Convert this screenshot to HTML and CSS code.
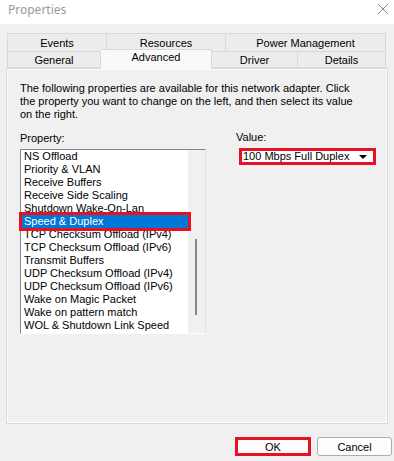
FILE: index.html
```html
<!DOCTYPE html>
<html lang="en">

<head>
    <meta charset="UTF-8">
    <meta name="viewport" content="width=device-width, initial-scale=1.0">
    <title>Properties</title>
    <link rel="stylesheet" href="styles.css">
</head>

<body>
    <div class="window">
        <div class="titlebar">
            <span class="title">Properties</span>
            <svg class="close" width="12" height="12" viewBox="0 0 12 12">
                <path d="M1 1 L11 11 M11 1 L1 11" stroke="#8a8a8a" stroke-width="1" fill="none" />
            </svg>
        </div>

        <div class="tabs">
            <div class="tab-row back">
                <div class="tab events">Events</div>
                <div class="tab resources">Resources</div>
                <div class="tab power">Power Management</div>
            </div>
            <div class="tab-row front">
                <div class="tab general">General</div>
                <div class="tab advanced selected">Advanced</div>
                <div class="tab driver">Driver</div>
                <div class="tab details">Details</div>
            </div>
        </div>

        <div class="panel">
            <p class="intro">The following properties are available for this network adapter. Click<br>
                the property you want to change on the left, and then select its value<br>
                on the right.</p>

            <div class="fields">
                <div class="field">
                    <label class="label">Property:</label>
                    <div class="listbox">
                        <ul class="items">
                            <li>NS Offload</li>
                            <li>Priority &amp; VLAN</li>
                            <li>Receive Buffers</li>
                            <li>Receive Side Scaling</li>
                            <li>Shutdown Wake-On-Lan</li>
                            <li class="active">Speed &amp; Duplex</li>
                            <li>TCP Checksum Offload (IPv4)</li>
                            <li>TCP Checksum Offload (IPv6)</li>
                            <li>Transmit Buffers</li>
                            <li>UDP Checksum Offload (IPv4)</li>
                            <li>UDP Checksum Offload (IPv6)</li>
                            <li>Wake on Magic Packet</li>
                            <li>Wake on pattern match</li>
                            <li>WOL &amp; Shutdown Link Speed</li>
                        </ul>
                        <div class="scrollbar">
                            <div class="thumb"></div>
                        </div>
                    </div>
                </div>

                <div class="field value">
                    <label class="label">Value:</label>
                    <div class="combo">
                        <span class="combo-text">100 Mbps Full Duplex</span>
                        <span class="arrow"></span>
                    </div>
                </div>
            </div>
        </div>

        <div class="buttons">
            <button class="btn ok">OK</button>
            <button class="btn">Cancel</button>
        </div>
    </div>
</body>

</html>
```

FILE: styles.css
```css
body {
    margin: 0;
    font-family: "Liberation Sans", Arial, sans-serif;
    font-size: 11px;
    color: #000;
    background-color: #f0f0f0;
}

.window {
    width: 394px;
    height: 461px;
    overflow: hidden;
}

/* title bar */
.titlebar {
    height: 24px;
    background-color: #fff;
    display: flex;
    align-items: center;
    justify-content: space-between;
    padding: 0 5px 6px 8px;
    box-sizing: border-box;
}

.title {
    font-family: "Noto Sans", sans-serif;
    font-size: 12px;
    color: #9a9a9a;
}

.close {
    display: block;
}

/* tabs */
.tabs {
    margin-top: 9px;
    padding-left: 7px;
}

.tab-row {
    display: flex;
    align-items: flex-start;
}

.tab-row.back {
    height: 18px;
}

.tab-row.front {
    height: 17px;
}

.tab {
    box-sizing: border-box;
    border: 1px solid #d9d9d9;
    background-color: #ececec;
    text-align: center;
    line-height: 16px;
}

.back .tab {
    height: 18px;
    border-bottom: none;
    line-height: 18px;
}

.front .tab {
    height: 17px;
}

.events { width: 100px; }
.resources { width: 119px; border-left: none !important; }
.power { width: 160px; border-left: none !important; }

.general { width: 94px; }
.driver { width: 86px; border-left: none !important; }
.details { width: 88px; border-left: none !important; }

.tab.selected {
    width: 111px;
    height: 20px;
    margin-top: -2px;
    background-color: #f9f9f9;
    border-bottom: none;
    border-left: none;
    line-height: 15px;
    position: relative;
    z-index: 1;
}

/* panel */
.panel {
    margin: 0 6px;
    height: 356px;
    box-sizing: border-box;
    border: 1px solid #d9d9d9;
    box-shadow: inset 0 0 0 1px #fbfbfb;
    padding: 13px 13px 0 13px;
}

.intro {
    margin: 0;
    line-height: 13px;
    white-space: nowrap;
}

.fields {
    display: flex;
    margin-top: 11px;
}

.field .label {
    display: block;
    line-height: 13px;
    margin-bottom: 4px;
}

.field.value {
    margin-left: 30px;
}

.field.value .label {
    margin-top: -1px;
}

/* listbox */
.listbox {
    width: 186px;
    height: 185px;
    box-sizing: border-box;
    display: flex;
    background-color: #fff;
    border-top: 1px solid #828790;
    border-left: 1px solid #828790;
    border-right: 1px solid #e3e3e3;
    border-bottom: 1px solid #fff;
}

.items {
    list-style: none;
    margin: 0;
    padding: 0 0 0 1px;
    flex: 1;
}

.items li {
    height: 13px;
    line-height: 13px;
    padding-left: 2px;
    white-space: nowrap;
}

.items li.active {
    background-color: #0078d7;
    color: #fff;
    outline: 3px solid #e81123;
    position: relative;
    z-index: 1;
}

.scrollbar {
    width: 17px;
    background-color: #f0f0f0;
    position: relative;
}

.thumb {
    position: absolute;
    left: 7px;
    top: 89px;
    width: 2px;
    height: 76px;
    background-color: #868686;
}

/* combo box */
.combo {
    margin-left: 3px;
    width: 137px;
    height: 17px;
    box-sizing: border-box;
    border: 3px solid #e81123;
    background-color: #fff;
    display: flex;
    align-items: center;
    justify-content: space-between;
    padding: 0 6px 0 1px;
}

.combo-text {
    line-height: 11px;
}

.arrow {
    width: 0;
    height: 0;
    border-left: 4px solid transparent;
    border-right: 4px solid transparent;
    border-top: 4px solid #000;
}

/* buttons */
.buttons {
    display: flex;
    justify-content: flex-end;
    gap: 6px;
    padding-right: 2px;
    margin-top: 13px;
}

.btn {
    font-family: "Liberation Sans", Arial, sans-serif;
    font-size: 11px;
    width: 75px;
    height: 19px;
    box-sizing: border-box;
    border: 1px solid #adadad;
    border-radius: 3px;
    background-color: #fdfdfd;
    color: #000;
    padding: 0;
}

.btn.ok {
    width: 76px;
    border: 3px solid #e81123;
    border-radius: 0;
}
```
